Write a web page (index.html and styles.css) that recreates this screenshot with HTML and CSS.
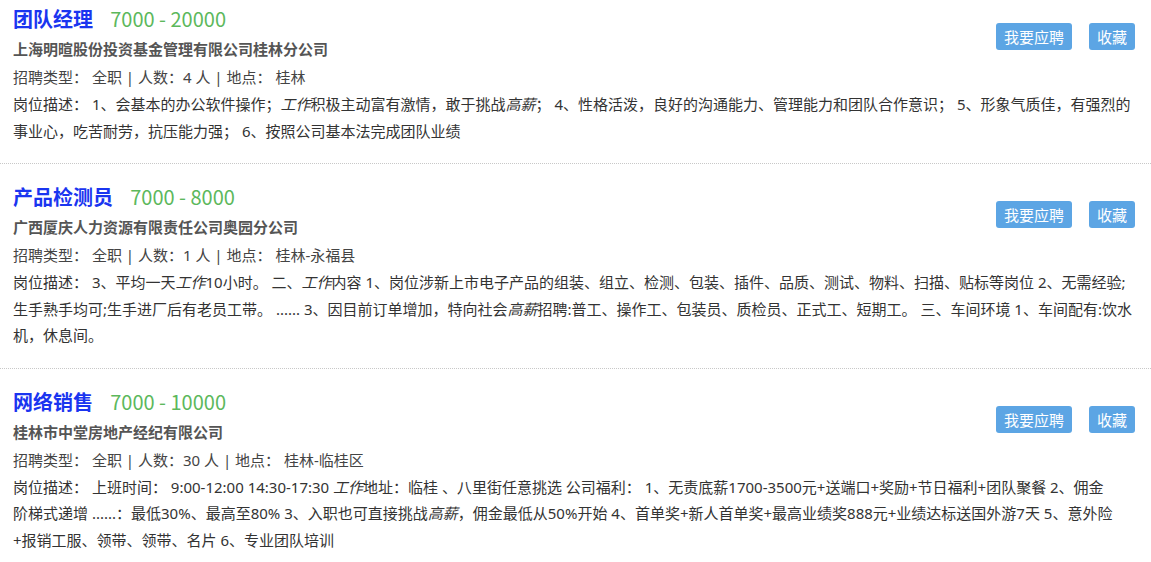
FILE: index.html
```html
<!DOCTYPE html>
<html lang="zh-CN">
  <head>
    <meta charset="UTF-8" />
    <meta name="viewport" content="width=device-width, initial-scale=1" />
    <title>职位列表</title>
    <link rel="stylesheet" href="styles.css">
  </head>
  <body>
    <div class="job-list">
      <div class="job-item">
        <div class="job-head">
          <div class="job-main">
            <h2 class="job-title">团队经理 <span class="salary">7000 - 20000</span></h2>
            <p class="company">上海明暄股份投资基金管理有限公司桂林分公司</p>
            <p class="job-info">招聘类型： 全职 | 人数：4 人 | 地点： 桂林</p>
          </div>
          <div class="job-actions">
            <button class="btn">我要应聘</button>
            <button class="btn">收藏</button>
          </div>
        </div>
        <p class="job-desc">岗位描述： 1、会基本的办公软件操作；<em>工作</em>积极主动富有激情，敢于挑战<em>高薪</em>； 4、性格活泼，良好的沟通能力、管理能力和团队合作意识； 5、形象气质佳，有强烈的事业心，吃苦耐劳，抗压能力强； 6、按照公司基本法完成团队业绩</p>
      </div>

      <div class="job-item">
        <div class="job-head">
          <div class="job-main">
            <h2 class="job-title">产品检测员 <span class="salary">7000 - 8000</span></h2>
            <p class="company">广西厦庆人力资源有限责任公司奥园分公司</p>
            <p class="job-info">招聘类型： 全职 | 人数：1 人 | 地点： 桂林-永福县</p>
          </div>
          <div class="job-actions">
            <button class="btn">我要应聘</button>
            <button class="btn">收藏</button>
          </div>
        </div>
        <p class="job-desc">岗位描述： 3、平均一天<em>工作</em>10小时。 二、<em>工作</em>内容 1、岗位涉新上市电子产品的组装、组立、检测、包装、插件、品质、测试、物料、扫描、贴标等岗位 2、无需经验;生手熟手均可;生手进厂后有老员工带。 ...... 3、因目前订单增加，特向社会<em>高薪</em>招聘:普工、操作工、包装员、质检员、正式工、短期工。 三、车间环境 1、车间配有:饮水机，休息间。</p>
      </div>

      <div class="job-item">
        <div class="job-head">
          <div class="job-main">
            <h2 class="job-title">网络销售 <span class="salary">7000 - 10000</span></h2>
            <p class="company">桂林市中堂房地产经纪有限公司</p>
            <p class="job-info">招聘类型： 全职 | 人数：30 人 | 地点： 桂林-临桂区</p>
          </div>
          <div class="job-actions">
            <button class="btn">我要应聘</button>
            <button class="btn">收藏</button>
          </div>
        </div>
        <p class="job-desc">岗位描述： 上班时间： 9:00-12:00 14:30-17:30 <em>工作</em>地址：临桂 、八里街任意挑选 公司福利： 1、无责底薪1700-3500元+送端口+奖励+节日福利+团队聚餐 2、佣金<br>阶梯式递增 ......：最低30%、最高至80% 3、入职也可直接挑战<em>高薪</em>，佣金最低从50%开始 4、首单奖+新人首单奖+最高业绩奖888元+业绩达标送国外游7天 5、意外险<br>+报销工服、领带、领带、名片 6、专业团队培训</p>
      </div>
    </div>
  </body>
</html>
```

FILE: styles.css
```css
* {
  box-sizing: border-box;
  margin: 0;
  padding: 0;
}
body {
  background: #fff;
  color: #333;
  font-family: "Noto Sans", "Noto Sans CJK SC", sans-serif;
  font-size: 15px;
  overflow: hidden;
}
.job-list {
  margin-top: -14px;
}
.job-item {
  padding: 18px 16px 19px 13px;
  border-bottom: 1px dotted #c8c8c8;
}
.job-head {
  display: flex;
  align-items: flex-start;
}
.job-main {
  flex: 1;
}
.job-title {
  font-size: 20px;
  line-height: 30px;
  font-weight: bold;
  color: #1a35f0;
}
.salary {
  margin-left: 12px;
  font-family: "Noto Sans CJK SC", sans-serif;
  font-weight: normal;
  color: #5cb85c;
}
.company {
  line-height: 28px;
  font-weight: bold;
  color: #555;
}
.job-info {
  line-height: 28px;
  color: #444;
}
.job-actions {
  display: flex;
  gap: 17px;
  margin-top: 19px;
}
.btn {
  height: 27px;
  padding: 0 8px;
  border: none;
  border-radius: 3px;
  background: #5ca5e4;
  color: #fff;
  font-family: inherit;
  font-size: 15px;
  cursor: pointer;
}
.job-desc {
  line-height: 26.5px;
  color: #333;
}
.job-desc em {
  font-style: italic;
}
```
